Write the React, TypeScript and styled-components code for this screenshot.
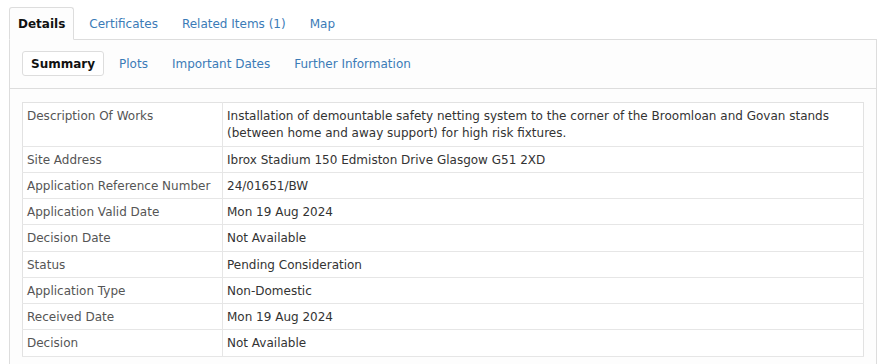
import styled, { createGlobalStyle } from "styled-components";

const GlobalStyle = createGlobalStyle`
  html, body {
    margin: 0;
    padding: 0;
    background: #ffffff;
  }
  body {
    font-family: "DejaVu Sans", Verdana, sans-serif;
    color: #333;
  }
`;

const Page = styled.div`
  padding: 7px 13px 0 9px;
`;

const TabList = styled.ul`
  display: flex;
  gap: 6px;
  margin: 0;
  padding: 0;
  list-style: none;
`;

const Tab = styled.li<{ $active?: boolean }>`
  padding: 1px 8px 0;
  height: 30px;
  line-height: 31px;
  font-size: 12px;
  border: 1px solid ${p => (p.$active ? "#dddddd" : "transparent")};
  border-bottom-color: ${p => (p.$active ? "#fdfdfd" : "transparent")};
  border-radius: 3px 3px 0 0;
  background: ${p => (p.$active ? "#fdfdfd" : "transparent")};
  color: ${p => (p.$active ? "#111" : "#3b7bb7")};
  font-weight: ${p => (p.$active ? 700 : 400)};
  margin-bottom: -1px;
  position: relative;
  z-index: 1;
  cursor: pointer;
`;

const Panel = styled.div`
  border: 1px solid #dddddd;
  background: #fdfdfd;
  min-height: 340px;
`;

const SubBar = styled.div`
  display: flex;
  gap: 6px;
  padding: 11px 12px 12px;
  border-bottom: 1px solid #dddddd;
`;

const Pill = styled.span<{ $active?: boolean }>`
  padding: 1px 8px 0;
  height: 22px;
  line-height: 23px;
  font-size: 12px;
  border: 1px solid ${p => (p.$active ? "#dddddd" : "transparent")};
  border-radius: 3px;
  background: ${p => (p.$active ? "#ffffff" : "transparent")};
  color: ${p => (p.$active ? "#111" : "#3b7bb7")};
  font-weight: ${p => (p.$active ? 700 : 400)};
  cursor: pointer;
`;

const Body = styled.div`
  padding: 13px 12px 0;
`;

const Table = styled.table`
  width: 100%;
  border-collapse: collapse;
  border: 1px solid #e2e2e2;
  background: #ffffff;
  font-size: 12px;
  line-height: 17.25px;
`;

const Row = styled.tr`
  border-bottom: 1px solid #e6e6e6;
`;

const Label = styled.td`
  width: 191px;
  padding: 5px 4px 3px;
  color: #555;
  vertical-align: top;
  border-right: 1px solid #e6e6e6;
`;

const Value = styled.td`
  padding: 5px 4px 3px;
  color: #333;
  vertical-align: top;
`;

const rows: [string, string][] = [
  [
    "Description Of Works",
    "Installation of demountable safety netting system to the corner of the Broomloan and Govan stands (between home and away support) for high risk fixtures.",
  ],
  ["Site Address", "Ibrox Stadium 150 Edmiston Drive Glasgow G51 2XD"],
  ["Application Reference Number", "24/01651/BW"],
  ["Application Valid Date", "Mon 19 Aug 2024"],
  ["Decision Date", "Not Available"],
  ["Status", "Pending Consideration"],
  ["Application Type", "Non-Domestic"],
  ["Received Date", "Mon 19 Aug 2024"],
  ["Decision", "Not Available"],
];

export default function App() {
  return (
    <>
      <GlobalStyle />
      <Page>
        <TabList>
          <Tab $active>Details</Tab>
          <Tab>Certificates</Tab>
          <Tab>Related Items (1)</Tab>
          <Tab>Map</Tab>
        </TabList>
        <Panel>
          <SubBar>
            <Pill $active>Summary</Pill>
            <Pill>Plots</Pill>
            <Pill>Important Dates</Pill>
            <Pill>Further Information</Pill>
          </SubBar>
          <Body>
            <Table>
              <tbody>
                {rows.map(([label, value]) => (
                  <Row key={label}>
                    <Label>{label}</Label>
                    <Value>{value}</Value>
                  </Row>
                ))}
              </tbody>
            </Table>
          </Body>
        </Panel>
      </Page>
    </>
  );
}
